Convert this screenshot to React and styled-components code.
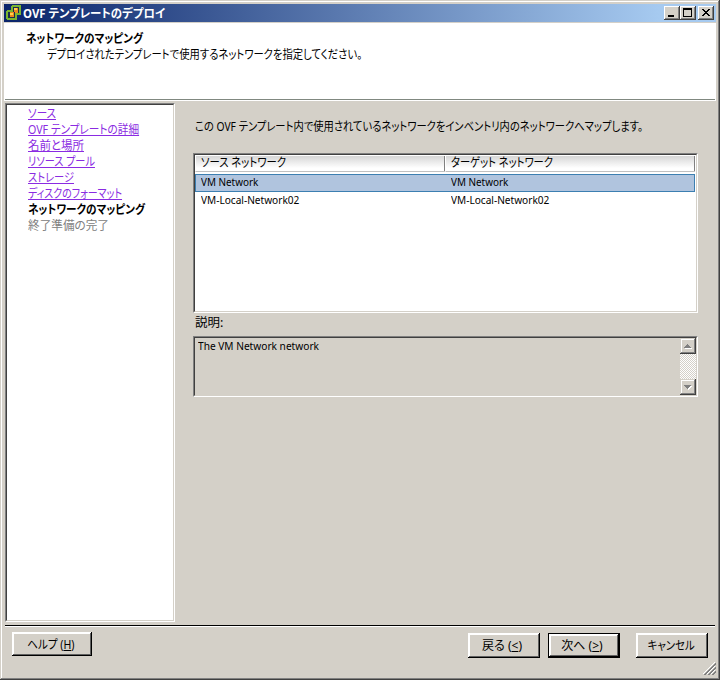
import React from "react";
import styled, { createGlobalStyle, css } from "styled-components";

const face = "#d4d0c8";

const Global = createGlobalStyle`
  *, *::before, *::after { box-sizing: border-box; }
  html, body { margin: 0; padding: 0; background: ${face}; overflow: hidden; }
  body {
    font-family: "Noto Sans", "Noto Sans CJK JP", sans-serif;
    font-size: 12px;
    color: #000;
    font-feature-settings: "palt";
  }
`;

const Window = styled.div`
  width: 720px;
  height: 680px;
  padding: 4px;
  display: flex;
  flex-direction: column;
  background: ${face};
  box-shadow: inset -1px -1px #404040, inset 1px 1px ${face},
    inset -2px -2px #808080, inset 2px 2px #fff;
`;

const Text = styled.span`
  display: block;
  width: max-content;
  flex: none;
  white-space: pre;
  line-height: 16px;
  font-size: ${(p) => p.$size || 12}px;
  font-weight: ${(p) => (p.$bold ? 700 : 400)};
  color: ${(p) => p.$color || "#000"};
  transform: scaleX(${(p) => p.$condense || 1});
  transform-origin: ${(p) => (p.$center ? "center" : "left")};
`;

const TitleBar = styled.header`
  flex: none;
  height: 18px;
  display: flex;
  align-items: center;
  padding: 0 2px;
  background: linear-gradient(90deg, #0a246a, #a6caf0 92%);
`;

const TitleText = styled(Text)`
  margin: 1px 0 0 1px;
`;

const CaptionButtons = styled.div`
  display: flex;
  margin-left: auto;
`;

const raised = css`
  background: ${face};
  box-shadow: inset -1px -1px #404040, inset 1px 1px #fff,
    inset -2px -2px #808080;
`;

const CaptionButton = styled.button`
  display: block;
  width: 16px;
  height: 14px;
  margin-left: ${(p) => (p.$gap ? 2 : 0)}px;
  padding: 0;
  border: 0;
  ${raised}
`;

const Glyph = styled.svg`
  display: block;
  flex: none;
  shape-rendering: crispEdges;
`;

const Banner = styled.section`
  flex: none;
  height: 78px;
  margin-top: 1px;
  display: flex;
  flex-direction: column;
  background: #fff;
`;

const BannerTitle = styled(Text)`
  margin: 8px 0 0 22px;
`;

const BannerText = styled(Text)`
  margin-left: 43px;
`;

const BannerRule = styled.div`
  height: 2px;
  margin: auto 1px 0;
  border-top: 1px solid #808880;
`;

const Body = styled.main`
  flex: none;
  display: flex;
  height: 519px;
  margin: 2px 0 0 1px;
`;

const Sunken = styled.div`
  position: relative;
  border: 1px solid;
  border-color: #808080 #fff #fff #808080;
  background: ${(p) => p.$bg || "#fff"};

  &::before {
    content: "";
    position: absolute;
    inset: 0;
    border: 1px solid;
    border-color: #404040 ${face} ${face} #404040;
    pointer-events: none;
  }
`;

const Steps = styled(Sunken)`
  flex: none;
  width: 170px;
  padding: 2px 0 0 22px;
`;

const Step = styled(Text)`
  height: 16px;
  text-decoration: ${(p) => (p.$link ? "underline" : "none")};
  text-decoration-thickness: 1px;
  text-underline-offset: 1px;
  text-decoration-skip-ink: none;
`;

const Content = styled.section`
  flex: none;
  width: 505px;
  margin-left: 18px;
  padding-top: 16px;
`;

const Intro = styled(Text)`
  margin-left: 2px;
`;

const Table = styled(Sunken)`
  height: 160px;
  margin-top: 18px;
  padding: 1px;
`;

const columns = css`
  display: grid;
  grid-template-columns: 250px 250px;
`;

const HeadRow = styled.div`
  ${columns}
  height: 17px;
  background: #fff;
  border-top: 1px solid #fff;
`;

const HeadCell = styled.div`
  height: 16px;
  padding-left: 5px;
  background: linear-gradient(#d6d6d6, #fff 80%);
  border-bottom: 1px solid #c0c0c0;
  border-left: 1px solid #fff;
  box-shadow: inset -1px 0 #808080;
`;

const HeadText = styled(Text)`
  margin-top: -1px;
`;

const Row = styled.div`
  ${columns}
  width: 500px;
  height: 18px;
  margin-top: ${(p) => (p.$active ? 2 : 0)}px;
  padding-left: 5px;
  border: 1px solid ${(p) => (p.$active ? "#3c7fb1" : "transparent")};
  background: ${(p) => (p.$active ? "#b0c4de" : "transparent")};
`;

const RowText = styled(Text)`
  margin-top: -1px;
`;

const DescriptionLabel = styled(Text)`
  margin: 2px 0 0 2px;
`;

const Description = styled(Sunken)`
  display: flex;
  justify-content: space-between;
  height: 61px;
  margin-top: 5px;
  padding: 1px 1px 1px 4px;
`;

const ScrollTrack = styled.div`
  display: flex;
  flex-direction: column;
  justify-content: space-between;
  width: 16px;
  background: repeating-conic-gradient(#fff 0 25%, ${face} 0 50%) 0 0 / 2px 2px;
`;

const ScrollButton = styled.button`
  display: block;
  width: 16px;
  height: 16px;
  padding: 0;
  border: 0;
  background: ${face};
  box-shadow: inset -1px -1px #404040, inset 1px 1px ${face},
    inset -2px -2px #808080, inset 2px 2px #fff;
`;

const FooterRule = styled.div`
  flex: none;
  height: 2px;
  margin: 3px 1px 0;
  background: #fff;
  border-top: 1px solid #000;
`;

const Footer = styled.footer`
  flex: none;
  display: flex;
  align-items: flex-start;
  height: 49px;
  padding: 6px 0 0 8px;
`;

const PushButton = styled.button`
  display: flex;
  align-items: center;
  justify-content: center;
  flex: none;
  width: ${(p) => p.$width || 72}px;
  height: ${(p) => p.$height || 25}px;
  margin: ${(p) => p.$margin || "0"};
  padding: ${(p) => p.$padding || "1px 2px 0 0"};
  border: ${(p) => (p.$primary ? "1px solid #000" : "0")};
  font-family: inherit;
  font-feature-settings: inherit;
  background: ${face};
  box-shadow: inset -1px -1px #000, inset 1px 1px #fff,
    inset -2px -2px #606060, inset 2px 2px #fff;
`;

const Grip = styled(Glyph)`
  align-self: flex-end;
  margin: 0 0 1px -5px;
`;

const AppIcon = () => (
  <Glyph width="16" height="16" viewBox="0 0 16 16">
    <path d="M6 0h8l1 1v8l-1 1h-3v4l-1 1H1l-1-1V6l1-1h4V1z" fill="#79b530" />
    <path d="M7 2h6v6h-4v5H2V7h5z" fill="#1b2c4c" />
    <path d="M8 3h4v5H9V7H8z" fill="#e8871e" />
    <path d="M8 3h3v2H8z" fill="#ffd34a" />
    <path d="M4 7h4v5H4z" fill="#e8871e" />
    <path d="M4 8h3v2H4z" fill="#ffd34a" />
  </Glyph>
);

const steps = [
  { label: "ソース", condense: 0.878, link: true },
  { label: "OVF テンプレートの詳細", condense: 0.887, link: true },
  { label: "名前と場所", condense: 0.956, link: true },
  { label: "リソース プール", condense: 0.848, link: true },
  { label: "ストレージ", condense: 0.853, link: true },
  { label: "ディスクのフォーマット", condense: 0.829, link: true },
  { label: "ネットワークのマッピング", condense: 0.884, bold: true },
  { label: "終了準備の完了", condense: 0.969, color: "#808080" },
];

const networks = [
  { name: "VM Network", condense: 0.9, active: true },
  { name: "VM-Local-Network02", condense: 0.917 },
];

export default function App() {
  return (
    <>
      <Global />
      <Window>
        <TitleBar>
          <AppIcon />
          <TitleText $bold $color="#fff" $condense={0.95}>OVF テンプレートのデプロイ</TitleText>
          <CaptionButtons>
            <CaptionButton aria-label="Minimize">
              <Glyph width="16" height="14"><path d="M4 9h6v2H4z" /></Glyph>
            </CaptionButton>
            <CaptionButton aria-label="Maximize">
              <Glyph width="16" height="14"><path fillRule="evenodd" d="M3 2h9v9H3zM4 4v6h7V4z" /></Glyph>
            </CaptionButton>
            <CaptionButton $gap aria-label="Close">
              <Glyph width="16" height="14">
                <path d="M4 3h2v1h1v1h2V4h1V3h2v1h-1v1h-1v1H9v1h1v1h1v1h1v1h-2V9H9V8H7v1H6v1H4V9h1V8h1V7h1V6H6V5H5V4H4z" />
              </Glyph>
            </CaptionButton>
          </CaptionButtons>
        </TitleBar>
        <Banner>
          <BannerTitle $bold $condense={0.884}>ネットワークのマッピング</BannerTitle>
          <BannerText $condense={0.86}>デプロイされたテンプレートで使用するネットワークを指定してください。</BannerText>
          <BannerRule />
        </Banner>
        <Body>
          <Steps>
            {steps.map((s) => (
              <Step
                key={s.label}
                $link={s.link}
                $bold={s.bold}
                $condense={s.condense}
                $color={s.link ? "#8a2be2" : s.color}
              >
                {s.label}
              </Step>
            ))}
          </Steps>
          <Content>
            <Intro $condense={0.858}>
              この OVF テンプレート内で使用されているネットワークをインベントリ内のネットワークへマップします。
            </Intro>
            <Table>
              <HeadRow>
                <HeadCell><HeadText $condense={0.863}>ソース ネットワーク</HeadText></HeadCell>
                <HeadCell><HeadText $condense={0.856}>ターゲット ネットワーク</HeadText></HeadCell>
              </HeadRow>
              {networks.map((n) => (
                <Row key={n.name} $active={n.active}>
                  <RowText $size={11} $condense={n.condense}>{n.name}</RowText>
                  <RowText $size={11} $condense={n.condense}>{n.name}</RowText>
                </Row>
              ))}
            </Table>
            <DescriptionLabel $condense={1.04}>説明:</DescriptionLabel>
            <Description $bg={face}>
              <Text $size={11} $condense={0.922}>The VM Network network</Text>
              <ScrollTrack>
                <ScrollButton aria-label="Scroll up">
                  <Glyph width="16" height="16">
                    <path d="M5 10h7v1H5z" fill="#fff" />
                    <path d="M7 6h1v1h1v1h1v1h1v1H4V9h1V8h1V7h1z" fill="#808080" />
                  </Glyph>
                </ScrollButton>
                <ScrollButton aria-label="Scroll down">
                  <Glyph width="16" height="16">
                    <path d="M5 7h7v1h-1v1h-1v1H9v1H8v-1H7V9H6V8H5z" fill="#fff" />
                    <path d="M4 6h7v1h-1v1H9v1H8v1H7V9H6V8H5V7H4z" fill="#808080" />
                  </Glyph>
                </ScrollButton>
              </ScrollTrack>
            </Description>
          </Content>
        </Body>
        <FooterRule />
        <Footer>
          <PushButton $width={80} $height={24} $margin="-1px auto 0 0" $padding="1px 2px 0 0">
            <Text $center $condense={0.88}>ヘルプ (<u>H</u>)</Text>
          </PushButton>
          <PushButton $padding="1px 4px 0 0"><Text $center>戻る (<u>&lt;</u>)</Text></PushButton>
          <PushButton $primary $margin="0 0 0 8px" $padding="1px 4px 0 0">
            <Text $center>次へ (<u>&gt;</u>)</Text>
          </PushButton>
          <PushButton $margin="0 0 0 16px"><Text $center $condense={0.865}>キャンセル</Text></PushButton>
          <Grip width="13" height="13">
            <path d="M0 12L12 0M4 12L12 4M8 12L12 8" stroke="#fff" />
            <path d="M1 13L13 1M2 13L13 2M5 13L13 5M6 13L13 6M9 13L13 9M10 13L13 10" stroke="#808080" />
          </Grip>
        </Footer>
      </Window>
    </>
  );
}
